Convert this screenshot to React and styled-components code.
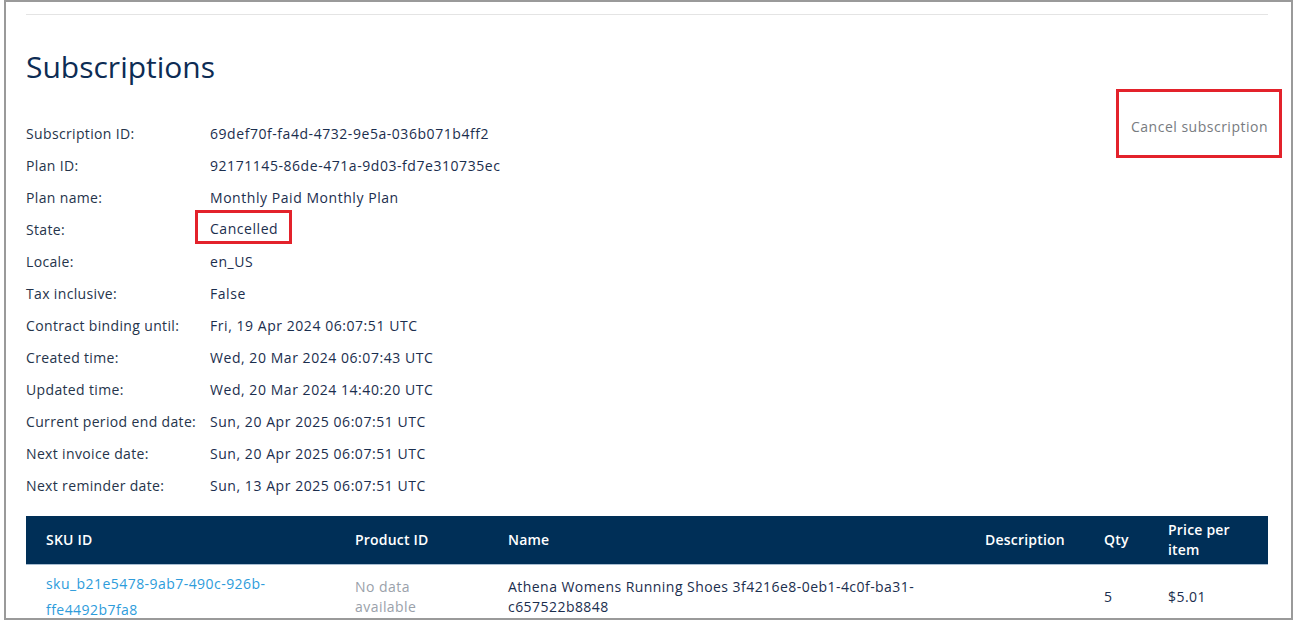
import React from "react";
import styled, { createGlobalStyle } from "styled-components";

const GlobalStyle = createGlobalStyle`
  html, body {
    margin: 0;
    padding: 0;
    background: #ffffff;
  }
  body {
    font-family: "Open Sans", "Noto Sans", Arial, sans-serif;
    -webkit-font-smoothing: antialiased;
  }
  * { box-sizing: border-box; }
`;

const Frame = styled.div`
  margin-left: 4px;
  width: 1289px;
  height: 620px;
  border: 2px solid #9a9a9a;
  padding: 12px 23px 0 20px;
  overflow: hidden;
  background: #fff;
`;

const Divider = styled.hr`
  margin: 0;
  border: 0;
  height: 1px;
  background: #e4e4e4;
`;

const Title = styled.h1`
  margin: 34px 0 0;
  font-size: 30px;
  line-height: 36px;
  font-weight: 400;
  color: #0d2c54;
  letter-spacing: 0;
`;

const Summary = styled.div`
  display: flex;
  justify-content: space-between;
  align-items: flex-start;
  margin-top: 32px;
`;

const DetailGrid = styled.dl`
  margin: 0;
  display: grid;
  grid-template-columns: 184px auto;
  grid-auto-rows: 32px;
  align-items: center;
  font-size: 14px;
`;

const Label = styled.dt`
  margin: 0;
  color: #25344b;
  white-space: nowrap;
  letter-spacing: 0.35px;
`;

const Value = styled.dd`
  margin: 0;
  color: #1b2e4e;
  white-space: nowrap;
  letter-spacing: 0.55px;
`;

const Marked = styled.span`
  position: relative;
  display: inline-block;
  line-height: 20px;
  &::after {
    content: "";
    position: absolute;
    left: -15px;
    right: -14px;
    top: -9px;
    bottom: -5px;
    border: 3px solid #e3222b;
    pointer-events: none;
  }
`;

const CancelButton = styled.button`
  position: relative;
  margin: 0;
  padding: 0;
  border: 0;
  background: transparent;
  font-family: inherit;
  font-size: 14px;
  line-height: 20px;
  letter-spacing: 0.5px;
  color: #777b80;
  cursor: pointer;
  &::after {
    content: "";
    position: absolute;
    left: -15px;
    right: -14px;
    top: -28px;
    bottom: -21px;
    border: 3px solid #e3222b;
    pointer-events: none;
  }
`;

const columns = "309px 153px 477px 119px 64px 120px";

const Table = styled.div`
  margin-top: 15px;
  font-size: 14px;
  letter-spacing: 0.45px;
`;

const HeadRow = styled.div`
  display: grid;
  grid-template-columns: ${columns};
  min-height: 48px;
  background: #002f57;
  border-bottom: 1px solid #a8bdd1;
  align-items: center;
`;

const HeadCell = styled.div`
  padding: 4px 20px;
  color: #ffffff;
  font-weight: 600;
  line-height: 20px;
  letter-spacing: 0.2px;
`;

const BodyRow = styled.div`
  display: grid;
  grid-template-columns: ${columns};
  align-items: center;
  padding: 6px 0 2px;
`;

const Cell = styled.div`
  padding: 0 20px;
  line-height: ${(p) => (p.$tall ? "26px" : "20px")};
  color: ${(p) => (p.$muted ? "#9aa1aa" : "#1b2e4e")};
`;

const Link = styled.a`
  color: #2d9cdb;
  text-decoration: none;
`;

const details = [
  ["Subscription ID:", "69def70f-fa4d-4732-9e5a-036b071b4ff2"],
  ["Plan ID:", "92171145-86de-471a-9d03-fd7e310735ec"],
  ["Plan name:", "Monthly Paid Monthly Plan"],
  ["State:", "Cancelled", true],
  ["Locale:", "en_US"],
  ["Tax inclusive:", "False"],
  ["Contract binding until:", "Fri, 19 Apr 2024 06:07:51 UTC"],
  ["Created time:", "Wed, 20 Mar 2024 06:07:43 UTC"],
  ["Updated time:", "Wed, 20 Mar 2024 14:40:20 UTC"],
  ["Current period end date:", "Sun, 20 Apr 2025 06:07:51 UTC"],
  ["Next invoice date:", "Sun, 20 Apr 2025 06:07:51 UTC"],
  ["Next reminder date:", "Sun, 13 Apr 2025 06:07:51 UTC"],
];

export default function App() {
  return (
    <>
      <GlobalStyle />
      <Frame>
        <Divider />
        <Title>Subscriptions</Title>
        <Summary>
          <DetailGrid>
            {details.map(([label, value, marked]) => (
              <React.Fragment key={label}>
                <Label>{label}</Label>
                <Value>{marked ? <Marked>{value}</Marked> : value}</Value>
              </React.Fragment>
            ))}
          </DetailGrid>
          <CancelButton type="button">Cancel subscription</CancelButton>
        </Summary>
        <Table>
          <HeadRow>
            <HeadCell>SKU ID</HeadCell>
            <HeadCell>Product ID</HeadCell>
            <HeadCell>Name</HeadCell>
            <HeadCell>Description</HeadCell>
            <HeadCell>Qty</HeadCell>
            <HeadCell>Price per item</HeadCell>
          </HeadRow>
          <BodyRow>
            <Cell $tall>
              <Link href="#sku">sku_b21e5478-9ab7-490c-926b-ffe4492b7fa8</Link>
            </Cell>
            <Cell $muted>No data available</Cell>
            <Cell>Athena Womens Running Shoes 3f4216e8-0eb1-4c0f-ba31-c657522b8848</Cell>
            <Cell />
            <Cell>5</Cell>
            <Cell>$5.01</Cell>
          </BodyRow>
        </Table>
      </Frame>
    </>
  );
}
